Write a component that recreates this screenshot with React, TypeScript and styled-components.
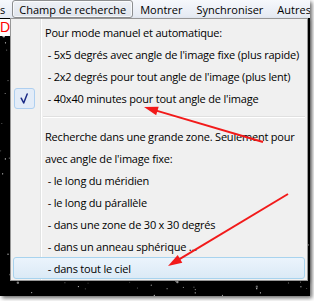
import React from "react";
import styled, { createGlobalStyle } from "styled-components";

const Global = createGlobalStyle`
  html, body { margin: 0; padding: 0; background: #ffffff; }
  body { font-family: "Open Sans", "Noto Sans", sans-serif; }
`;

const Page = styled.div`
  width: 314px;
  height: 301px;
  overflow: hidden;
  background: #ffffff;
`;

const Screen = styled.div`
  position: relative;
  width: 310px;
  height: 296px;
  display: flex;
  flex-direction: column;
  background: #000;
  box-shadow: 2px 2px 4px rgba(0, 0, 0, 0.6);
`;

const MenuBar = styled.div`
  height: 18px;
  flex: none;
  display: flex;
  align-items: center;
  background: linear-gradient(#f6f8fc, #e4e9f2);
  font-size: 11px;
  letter-spacing: 0px;
  color: #000;
  white-space: nowrap;
  overflow: hidden;
`;

const MenuTitle = styled.div<{ $active?: boolean; $ml?: number }>`
  height: 16px;
  flex: none;
  display: flex;
  align-items: center;
  padding: 0 6px;
  margin-left: ${(p) => p.$ml ?? 0}px;
  border: 1px solid ${(p) => (p.$active ? "#8d8f91" : "transparent")};
  border-radius: 3px;
  background: ${(p) =>
    p.$active ? "linear-gradient(#eef1f6, #dfe4ec)" : "transparent"};
  box-shadow: ${(p) => (p.$active ? "inset 0 0 0 1px rgba(255,255,255,0.7)" : "none")};
`;

const Canvas = styled.div`
  position: relative;
  flex: 1;
  overflow: hidden;
`;

const Stars = styled.svg`
  position: absolute;
  inset: 0;
`;

const RedLabel = styled.div`
  position: relative;
  width: 10px;
  height: 17px;
  margin-top: 1px;
  background: #fff;
  color: #ff0000;
  font-family: "Liberation Sans", sans-serif;
  font-size: 14px;
  line-height: 17px;
  overflow: hidden;
  direction: rtl;
  white-space: nowrap;
`;

const Dropdown = styled.div`
  position: absolute;
  left: 10px;
  top: 18px;
  width: 298px;
  height: 263px;
  border: 1px solid #979797;
  padding: 2px 2px;
  box-sizing: border-box;
  background:
    linear-gradient(
      to right,
      transparent 29px,
      #e2e3e3 29px,
      #e2e3e3 30px,
      #ffffff 30px,
      #ffffff 31px,
      transparent 31px
    ),
    #f0f0f0;
  font-size: 11px;
  letter-spacing: -0.2px;
  color: #000;
  white-space: nowrap;
  overflow: hidden;
  box-shadow: 2px 2px 3px rgba(0, 0, 0, 0.35);
`;

const Item = styled.div<{ $hover?: boolean }>`
  height: 22px;
  box-sizing: border-box;
  display: flex;
  align-items: center;
  border: 1px solid ${(p) => (p.$hover ? "#a8d3ee" : "transparent")};
  border-radius: 3px;
  background: ${(p) =>
    p.$hover ? "linear-gradient(#ebf4fc, #dbeaf6)" : "transparent"};
`;

const CheckCell = styled.div<{ $on?: boolean }>`
  width: 21px;
  height: 21px;
  flex: none;
  box-sizing: border-box;
  border: 1px solid ${(p) => (p.$on ? "#aecff0" : "transparent")};
  border-radius: 3px;
  background: ${(p) => (p.$on ? "#e3ecf8" : "transparent")};
  display: flex;
  align-items: center;
  justify-content: center;
`;

const Label = styled.span`
  margin-left: 10px;
  white-space: pre;
`;

const Separator = styled.div`
  height: 16px;
  margin-left: 30px;
  display: flex;
  flex-direction: column;
  justify-content: center;
  &::before {
    content: "";
    height: 1px;
    background: #e0e0e0;
  }
  &::after {
    content: "";
    height: 1px;
    background: #ffffff;
  }
`;

const Arrows = styled.svg`
  position: absolute;
  left: 0;
  top: 0;
  pointer-events: none;
`;

function StarField() {
  const dots: { x: number; y: number; r: number; o: number }[] = [];
  let s = 12345;
  const rnd = () => {
    s = (s * 1103515245 + 12345) % 2147483648;
    return s / 2147483648;
  };
  for (let i = 0; i < 500; i++) {
    dots.push({
      x: rnd() * 310,
      y: rnd() * 280,
      r: rnd() < 0.1 ? 1.2 : 0.6,
      o: 0.3 + rnd() * 0.7,
    });
  }
  return (
    <Stars width="310" height="278" viewBox="0 0 310 278">
      {dots.map((d, i) => (
        <circle key={i} cx={d.x} cy={d.y} r={d.r} fill="#fff" opacity={d.o} />
      ))}
    </Stars>
  );
}

function Arrow({ x1, y1, x2, y2 }: { x1: number; y1: number; x2: number; y2: number }) {
  const dx = x2 - x1;
  const dy = y2 - y1;
  const len = Math.hypot(dx, dy);
  const ux = dx / len;
  const uy = dy / len;
  const hl = 14;
  const hw = 4.5;
  const bx = x2 - ux * hl;
  const by = y2 - uy * hl;
  const p1 = `${bx - uy * hw},${by + ux * hw}`;
  const p2 = `${bx + uy * hw},${by - ux * hw}`;
  return (
    <g>
      <line x1={x1} y1={y1} x2={bx + ux * 2} y2={by + uy * 2} stroke="#f21a1a" strokeWidth={2} />
      <polygon points={`${x2},${y2} ${p1} ${p2}`} fill="#f21a1a" />
    </g>
  );
}

const items1 = [
  "Pour mode manuel et automatique:",
  " - 5x5 degrés avec angle de l'image fixe (plus rapide)",
  " - 2x2 degrés pour tout angle de l'image (plus lent)",
];

const items2 = [
  "Recherche dans une grande zone. Seulement pour",
  "avec angle de l'image fixe:",
  " - le long du méridien",
  " - le long du párallèle",
  " - dans une zone de 30 x 30 degrés",
  " - dans un anneau sphérique ...",
];

export default function App() {
  return (
    <Page>
      <Global />
      <Screen>
        <MenuBar>
          <MenuTitle $ml={-7}>s</MenuTitle>
          <MenuTitle $active>Champ de recherche</MenuTitle>
          <MenuTitle>Montrer</MenuTitle>
          <MenuTitle>Synchroniser</MenuTitle>
          <MenuTitle>Autres</MenuTitle>
        </MenuBar>
        <Canvas>
          <StarField />
          <RedLabel>LD</RedLabel>
        </Canvas>
        <Dropdown>
          {items1.map((t) => (
            <Item key={t}>
              <CheckCell />
              <Label>{t}</Label>
            </Item>
          ))}
          <Item>
            <CheckCell $on>
              <svg width="19" height="19" viewBox="0 0 19 19">
                <path d="M6.2 9.2 L8.7 14 L12.2 5" fill="none" stroke="#1b2a86" strokeWidth="1.5" strokeLinejoin="round" strokeLinecap="round" />
              </svg>
            </CheckCell>
            <Label> - 40x40 minutes pour tout angle de l'image</Label>
          </Item>
          <Separator />
          {items2.map((t) => (
            <Item key={t}>
              <CheckCell />
              <Label>{t}</Label>
            </Item>
          ))}
          <Item $hover>
            <CheckCell />
            <Label> - dans tout le ciel</Label>
          </Item>
        </Dropdown>
        <Arrows width="310" height="296" viewBox="0 0 310 296">
          <Arrow x1={263} y1={142} x2={144} y2={107} />
          <Arrow x1={288} y1={194} x2={168} y2={266} />
        </Arrows>
      </Screen>
    </Page>
  );
}
